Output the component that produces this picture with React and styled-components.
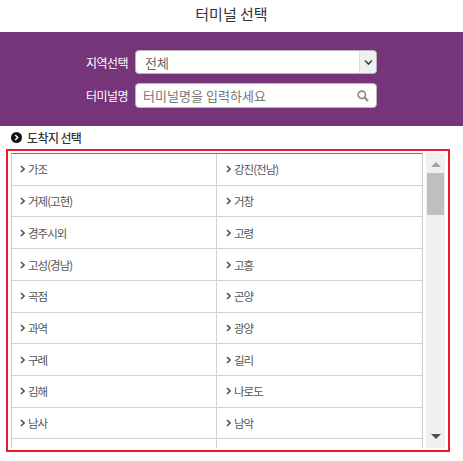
import React from "react";
import styled, { createGlobalStyle } from "styled-components";

const Global = createGlobalStyle`
  html, body { margin: 0; padding: 0; background: #fff; }
  body { font-family: "Noto Sans CJK KR", "Noto Sans", sans-serif; overflow: hidden; }
  * { box-sizing: border-box; }
`;
const Page = styled.div`width: 463px; height: 461px; display: flex; flex-direction: column;`;
const Title = styled.h1`
  margin: 0; height: 32px; display: flex; align-items: center; justify-content: center;
  font-size: 15px; font-weight: 400; color: #333; padding-bottom: 6px;
`;
const Panel = styled.div`
  height: 94px; background: #763578; padding: 18px 0 0 85px;
  display: flex; flex-direction: column; gap: 9px;
`;
const FormRow = styled.div`display: flex; align-items: center; gap: 7px;`;
const Label = styled.label`width: 43px; font-size: 12px; color: #fff; white-space: nowrap; letter-spacing: -0.5px; padding-left: 1px;`;
const Field = styled.div`
  width: 242px; height: ${p => p.$h}px; background: #fff; border-radius: 4px;
  border: 1px solid #b9b3ba; display: flex; align-items: center; font-size: 13px;
`;
const FieldText = styled.span`flex: 1; padding-left: ${p => p.$pl}px; color: ${p => p.$c}; letter-spacing: ${p => p.$ls};`;
const SelectBtn = styled.span`
  width: 17px; height: 100%; background: #f0f0f0; border-left: 1px solid #ddd;
  border-radius: 0 3px 3px 0; display: flex; align-items: center; justify-content: center;
`;
const SearchBtn = styled.span`width: 19px; display: flex; align-items: center;`;
const Heading = styled.div`
  display: flex; align-items: center; gap: 5px; height: 23px; padding-left: 11px;
  font-size: 12px; font-weight: 500; color: #333; letter-spacing: -0.6px;
`;
const Frame = styled.div`
  margin-left: 6px; width: 444px; height: 303px; border: 2px solid #ed1c24;
  padding: 2px 3px 2px 3px; display: flex; gap: 3px;
`;
const Grid = styled.div`
  width: 412px; height: 295px; overflow: hidden; border-top: 1px solid #777;
  border-left: 1px solid #ccc; border-right: 1px solid #ccc;
`;
const Row = styled.div`display: flex; height: 31.72px; border-bottom: 1px solid #d2d2d2;`;
const Cell = styled.div`
  flex: ${p => p.$first ? "0 0 204px" : "1"}; display: flex; align-items: center; gap: 3px;
  padding-left: ${p => p.$first ? 8 : 9}px;
  font-size: 11.5px; color: #555; letter-spacing: -1px;
  & + & { border-left: 1px solid #d2d2d2; }
`;
const Scroll = styled.div`
  width: 19px; height: 295px; background: #f0f0f0; display: flex; flex-direction: column; align-items: center;
`;
const Thumb = styled.div`width: 17px; height: 42px; background: #bfbfbf; margin-top: 6px;`;
const Arrow = styled.div`
  width: 0; height: 0; border-left: 5px solid transparent; border-right: 5px solid transparent;
  ${p => p.$up ? "border-bottom: 5px solid #a3a3a3; margin-top: 9px;" : "border-top: 5px solid #505050; margin-top: auto; margin-bottom: 9px;"}
`;

const rows = [["가조","강진(전남)"],["거제(고현)","거창"],["경주시외","고령"],["고성(경남)","고흥"],["곡점","곤양"],["과역","광양"],["구례","길리"],["김해","나로도"],["남사","남악"],["",""]];
const Chev = () => (
  <svg width="5" height="8" viewBox="0 0 5 8"><path d="M1 1l3 3-3 3" fill="none" stroke="#555" strokeWidth="1.6" /></svg>
);

export default function App() {
  return (
    <Page>
      <Global />
      <Title>터미널 선택</Title>
      <Panel>
        <FormRow>
          <Label>지역선택</Label>
          <Field $h={24}>
            <FieldText $pl={9} $c="#666">전체</FieldText>
            <SelectBtn>
              <svg width="9" height="7" viewBox="0 0 9 7"><path d="M1 1.5l3.5 3.5L8 1.5" fill="none" stroke="#444" strokeWidth="1.6" /></svg>
            </SelectBtn>
          </Field>
        </FormRow>
        <FormRow>
          <Label>터미널명</Label>
          <Field $h={25}>
            <FieldText $pl={7} $c="#777" $ls="0.05px">터미널명을 입력하세요</FieldText>
            <SearchBtn>
              <svg width="12" height="12" viewBox="0 0 13 13"><circle cx="5.2" cy="5.2" r="4" fill="none" stroke="#888" strokeWidth="1.7" /><path d="M8.2 8.2L12 12" stroke="#888" strokeWidth="2.2" /></svg>
            </SearchBtn>
          </Field>
        </FormRow>
      </Panel>
      <Heading>
        <svg width="11" height="11" viewBox="0 0 11 11"><circle cx="5.5" cy="5.5" r="5.5" fill="#111" /><path d="M4.2 3l2.5 2.5L4.2 8" fill="none" stroke="#fff" strokeWidth="1.5" /></svg>
        도착지 선택
      </Heading>
      <Frame>
        <Grid>
          {rows.map((r, i) => (
            <Row key={i}>
              {r.map((t, j) => <Cell key={j} $first={j === 0}>{t && <Chev />}{t}</Cell>)}
            </Row>
          ))}
        </Grid>
        <Scroll>
          <Arrow $up />
          <Thumb />
          <Arrow />
        </Scroll>
      </Frame>
    </Page>
  );
}
